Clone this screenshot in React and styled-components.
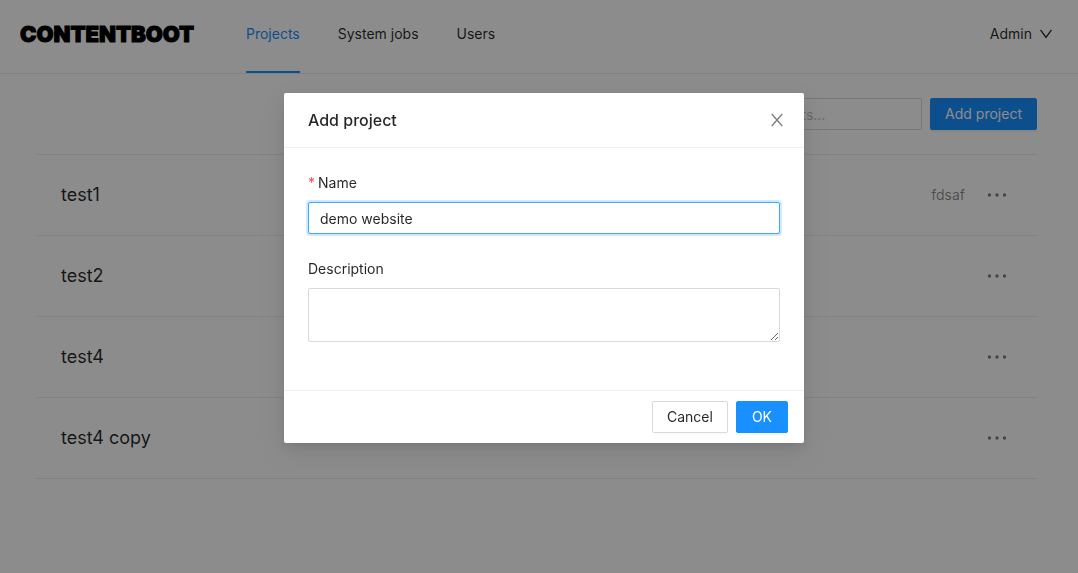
import React from 'react';
import styled, { createGlobalStyle, css } from 'styled-components';

const GlobalStyle = createGlobalStyle`
  *, *::before, *::after { box-sizing: border-box; }
  body {
    margin: 0;
    background: #fff;
    color: rgba(0, 0, 0, 0.85);
    font: 14px/22px Inter, "Liberation Sans", sans-serif;
  }
  button, input, textarea { font: inherit; color: inherit; }
`;

const Header = styled.header`
  display: flex;
  align-items: center;
  height: 74px;
  padding: 0 26px 0 20px;
  border-bottom: 1px solid #ebebeb;
`;

const Logo = styled.a`
  width: 174px;
  margin-right: 52px;
  padding-bottom: 6px;
  color: #000;
  font-size: 22px;
  line-height: 24px;
  font-weight: 900;
  -webkit-text-stroke: 1px #000;
  white-space: nowrap;
  text-decoration: none;
`;

const Nav = styled.nav`
  display: flex;
  flex: 1;
  gap: 38px;
  align-self: stretch;
`;

const NavLink = styled.a`
  display: flex;
  align-items: center;
  padding-bottom: 3px;
  border-bottom: 2px solid ${(p) => (p.$active ? '#1890ff' : 'transparent')};
  color: ${(p) => (p.$active ? '#1890ff' : 'rgba(0, 0, 0, 0.85)')};
  text-decoration: none;
`;

const UserMenu = styled.button`
  display: flex;
  align-items: center;
  gap: 8px;
  padding: 0 0 6px;
  border: 0;
  background: none;
`;

const Main = styled.main`
  padding: 24px 41px 24px 37px;
`;

const Toolbar = styled.div`
  display: flex;
  justify-content: flex-end;
  gap: 8px;
  margin-bottom: 24px;
`;

const fieldStyle = css`
  display: block;
  padding: 4px 11px;
  border: 1px solid #d9d9d9;
  border-radius: 2px;
  background: #fff;
  outline: none;
`;

const SearchInput = styled.input`
  ${fieldStyle}
  width: 247px;
  height: 32px;
  &::placeholder { color: #bfbfbf; }
`;

const Button = styled.button`
  height: 32px;
  padding: 4px 14px;
  border: 1px solid ${(p) => (p.$primary ? '#1890ff' : '#d9d9d9')};
  border-radius: 2px;
  background: ${(p) => (p.$primary ? '#1890ff' : '#fff')};
  color: ${(p) => (p.$primary ? '#fff' : 'rgba(0, 0, 0, 0.85)')};
  box-shadow: 0 2px 0 rgba(0, 0, 0, ${(p) => (p.$primary ? 0.04 : 0.015)});
  white-space: nowrap;
`;

const SubmitButton = styled(Button)`
  padding: 4px 15px;
`;

const ProjectList = styled.ul`
  margin: 0;
  padding: 0;
  list-style: none;
  border-top: 1px solid #ebebeb;
`;

const ProjectRow = styled.li`
  display: flex;
  align-items: center;
  height: 81px;
  padding: 0 30px 0 24px;
  border-bottom: 1px solid #ebebeb;
`;

const ProjectName = styled.a`
  flex: 1;
  color: rgba(0, 0, 0, 0.85);
  font-size: 18px;
  line-height: 24px;
  text-decoration: none;
`;

const ProjectNote = styled.span`
  color: rgba(0, 0, 0, 0.45);
`;

const IconButton = styled.button`
  display: flex;
  padding: 0;
  border: 0;
  background: none;
  color: rgba(0, 0, 0, 0.5);
`;

const MoreButton = styled(IconButton)`
  margin-left: 22px;
`;

const Mask = styled.div`
  position: fixed;
  inset: 0;
  display: flex;
  justify-content: center;
  align-items: flex-start;
  padding: 93px 0 24px 10px;
  overflow: auto;
  background: rgba(0, 0, 0, 0.45);
`;

const Dialog = styled.section`
  width: 520px;
  max-width: calc(100vw - 32px);
  border-radius: 2px;
  background: #fff;
  box-shadow: 0 3px 6px -4px rgba(0, 0, 0, 0.12), 0 6px 16px rgba(0, 0, 0, 0.08),
    0 9px 28px 8px rgba(0, 0, 0, 0.05);
`;

const DialogHeader = styled.header`
  display: flex;
  align-items: center;
  justify-content: space-between;
  padding: 16px 20px 16px 24px;
  border-bottom: 1px solid #f0f0f0;
`;

const DialogTitle = styled.h2`
  margin: 0;
  font-size: 16px;
  line-height: 22px;
  font-weight: 500;
`;

const DialogBody = styled.form`
  padding: 24px;
`;

const Field = styled.div`
  margin-bottom: 24px;
`;

const Label = styled.label`
  display: block;
  padding-bottom: 8px;
`;

const Required = styled.span`
  margin-right: 3px;
  color: #ff4d4f;
`;

const TextInput = styled.input`
  ${fieldStyle}
  width: 100%;
  height: 32px;
  border-color: #40a9ff;
  box-shadow: 0 0 0 2px rgba(24, 144, 255, 0.2);
`;

const TextArea = styled.textarea`
  ${fieldStyle}
  width: 100%;
  height: 54px;
  resize: vertical;
`;

const DialogFooter = styled.footer`
  display: flex;
  justify-content: flex-end;
  gap: 8px;
  padding: 10px 16px;
  border-top: 1px solid #f0f0f0;
`;

const ChevronDown = () => (
  <svg width="12" height="12" viewBox="0 0 12 12" fill="none" stroke="currentColor" strokeWidth="1.3" aria-hidden="true">
    <path d="M0.5 1.8 6 9.3 11.5 1.8" />
  </svg>
);

const CloseIcon = () => (
  <svg width="14" height="14" viewBox="0 0 14 14" fill="none" stroke="currentColor" strokeWidth="1.4" aria-hidden="true">
    <path d="M1.8 1 12.2 13M12.2 1 1.8 13" />
  </svg>
);

const MoreIcon = () => (
  <svg width="20" height="20" viewBox="0 0 20 20" fill="currentColor" aria-hidden="true">
    <circle cx="2.5" cy="10" r="1.7" />
    <circle cx="10" cy="10" r="1.7" />
    <circle cx="17.5" cy="10" r="1.7" />
  </svg>
);

const projects = [
  { name: 'test1', note: 'fdsaf' },
  { name: 'test2' },
  { name: 'test4' },
  { name: 'test4 copy' },
];

export default function App() {
  return (
    <>
      <GlobalStyle />
      <Header>
        <Logo href="#">CONTENTBOOT</Logo>
        <Nav>
          <NavLink href="#projects" $active>Projects</NavLink>
          <NavLink href="#jobs">System jobs</NavLink>
          <NavLink href="#users">Users</NavLink>
        </Nav>
        <UserMenu type="button">Admin <ChevronDown /></UserMenu>
      </Header>
      <Main>
        <Toolbar>
          <SearchInput type="text" placeholder="Search for projects..." aria-label="Search for projects" />
          <Button type="button" $primary>Add project</Button>
        </Toolbar>
        <ProjectList>
          {projects.map((p) => (
            <ProjectRow key={p.name}>
              <ProjectName href="#project">{p.name}</ProjectName>
              {p.note && <ProjectNote>{p.note}</ProjectNote>}
              <MoreButton type="button" aria-label={`Actions for ${p.name}`}><MoreIcon /></MoreButton>
            </ProjectRow>
          ))}
        </ProjectList>
      </Main>
      <Mask>
        <Dialog role="dialog" aria-modal="true" aria-labelledby="dialog-title">
          <DialogHeader>
            <DialogTitle id="dialog-title">Add project</DialogTitle>
            <IconButton type="button" aria-label="Close"><CloseIcon /></IconButton>
          </DialogHeader>
          <DialogBody id="project-form">
            <Field>
              <Label htmlFor="name"><Required>*</Required>Name</Label>
              <TextInput id="name" type="text" defaultValue="demo website" required />
            </Field>
            <Field>
              <Label htmlFor="description">Description</Label>
              <TextArea id="description" />
            </Field>
          </DialogBody>
          <DialogFooter>
            <Button type="button">Cancel</Button>
            <SubmitButton type="submit" form="project-form" $primary>OK</SubmitButton>
          </DialogFooter>
        </Dialog>
      </Mask>
    </>
  );
}
